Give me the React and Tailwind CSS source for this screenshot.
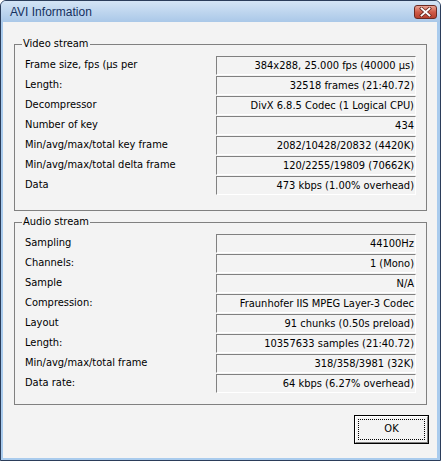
import React from "react";

const video = [
  ["Frame size, fps (µs per", "384x288, 25.000 fps (40000 µs)"],
  ["Length:", "32518 frames (21:40.72)"],
  ["Decompressor", "DivX 6.8.5 Codec (1 Logical CPU)"],
  ["Number of key", "434"],
  ["Min/avg/max/total key frame", "2082/10428/20832 (4420K)"],
  ["Min/avg/max/total delta frame", "120/2255/19809 (70662K)"],
  ["Data", "473 kbps (1.00% overhead)"],
];

const audio = [
  ["Sampling", "44100Hz"],
  ["Channels:", "1 (Mono)"],
  ["Sample", "N/A"],
  ["Compression:", "Fraunhofer IIS MPEG Layer-3 Codec"],
  ["Layout", "91 chunks (0.50s preload)"],
  ["Length:", "10357633 samples (21:40.72)"],
  ["Min/avg/max/total frame", "318/358/3981 (32K)"],
  ["Data rate:", "64 kbps (6.27% overhead)"],
];

const InfoRow = ({ label, value }) => (
  <div className="flex h-[20px]">
    <div className="w-[191px] leading-[17px] whitespace-nowrap overflow-hidden">
      {label}
    </div>
    <div className="w-[200px] h-[19px] border-t border-l border-b border-r border-t-[#808080] border-l-[#808080] border-b-white border-r-white text-right leading-[17px] pr-[1px] whitespace-nowrap overflow-hidden">
      {value}
    </div>
  </div>
);

const GroupBox = ({ title, rows, className }) => (
  <fieldset
    className={`w-[413px] border border-[#808080] pl-[10px] pr-[10px] pt-[5px] m-0 ${className}`}
  >
    <legend className="ml-[-3px] px-[1px] leading-[14px]">{title}</legend>
    {rows.map(([label, value]) => (
      <InfoRow key={label + value} label={label} value={value} />
    ))}
  </fieldset>
);

export default function App() {
  return (
    <div
      className="w-[441px] h-[461px] flex flex-col bg-[#a9cbed] border border-[#2b3d5a] rounded-t-[6px] overflow-hidden text-[11px] text-black"
      style={{ fontFamily: "'DejaVu Sans Condensed', 'Liberation Sans', sans-serif" }}
    >
      <div className="h-[21px] flex items-start bg-gradient-to-b from-[#d4e4f5] to-[#aac8e8]">
        <span
          className="pl-[9px] pt-[4px] text-[12px] leading-[15px] text-[#15305e]"
          style={{ fontFamily: "'Liberation Sans', Arial, sans-serif" }}
        >
          AVI Information
        </span>
        <button className="ml-auto mt-[4px] mr-[3px] w-[23px] h-[14px] rounded-[3px] border border-[#6b2a22] bg-gradient-to-b from-[#e8a496] via-[#cf5b48] to-[#b8412f] flex items-center justify-center">
          <svg width="13" height="10" viewBox="0 0 13 10">
            <path d="M2.5 1.5 L10.5 8.5 M10.5 1.5 L2.5 8.5" stroke="#6b2a22" strokeWidth="3.4" strokeLinecap="square" />
            <path d="M2.5 1.5 L10.5 8.5 M10.5 1.5 L2.5 8.5" stroke="#ffffff" strokeWidth="1.8" strokeLinecap="square" />
          </svg>
        </button>
      </div>
      <div className="flex-1 ml-[2px] mr-[3px] mb-[2px] bg-[#f3f3f3] pl-[11px] pr-[10px] pt-[15px] pb-[14px] flex flex-col">
        <GroupBox title="Video stream" rows={video} className="pb-[14px]" />
        <GroupBox title="Audio stream" rows={audio} className="mt-[4px] pb-[10px]" />
        <div className="mt-[10px] flex justify-end -mr-[2px]">
          <button className="w-[75px] h-[29px] border border-black bg-[#f3f3f3] p-0">
            <div className="w-full h-full border border-t-white border-l-white border-b-[#808080] border-r-[#808080] p-[2px]">
              <div className="w-full h-full border border-dotted border-black flex items-center justify-center">
                OK
              </div>
            </div>
          </button>
        </div>
      </div>
    </div>
  );
}
